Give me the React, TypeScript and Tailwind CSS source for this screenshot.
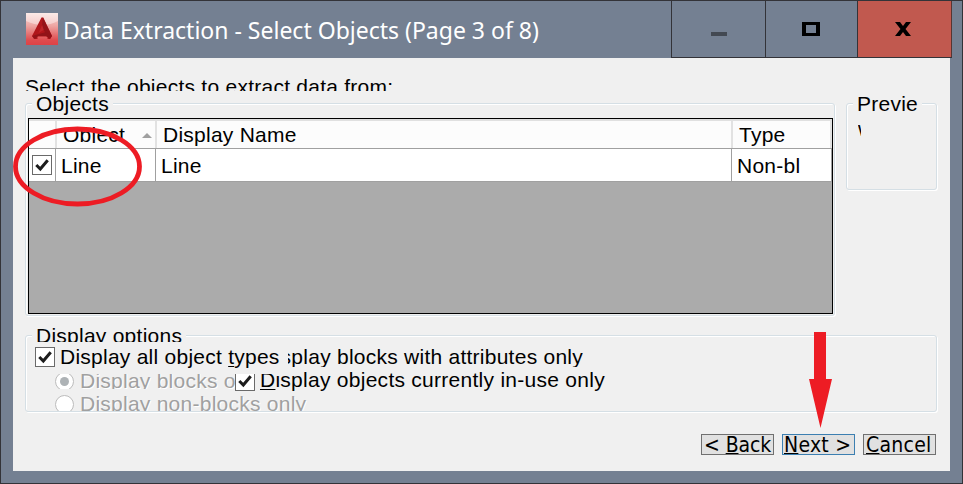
import type { ReactNode } from "react";

const groupBox =
  "flex flex-col items-start rounded-[3px] border border-[#d5dfe5] shadow-[inset_1px_1px_0_#fff,1px_1px_0_#fff]";

function AppLogo() {
  return (
    <svg width="32" height="32" viewBox="0 0 32 32" className="block">
      <defs>
        <linearGradient id="tile" x1="0" y1="0" x2="0" y2="1">
          <stop offset="0" stopColor="#f9dcd8" />
          <stop offset="0.4" stopColor="#eea5a2" />
          <stop offset="0.85" stopColor="#df4b4e" />
          <stop offset="1" stopColor="#dd4246" />
        </linearGradient>
      </defs>
      <rect width="32" height="32" fill="url(#tile)" />
      <path d="M0 0h32v8Q17 16 0 8z" fill="#fff" opacity="0.4" />
      <path d="M15.500 4.500h1.800L26 23l-2 3h-2.500v-2.500h-10V26H8l-2-3z" fill="#b0161b" />
      <path d="M16.800 4.500L26 23l-6-2-4-7z" fill="#941318" />
      <path d="M6 23l14-4 6 4-2 3-4-3H12l-3 3z" fill="#921318" />
      <path d="M16.200 12l1.500 5-5.200 3z" fill="#bf2428" />
    </svg>
  );
}

function CheckBox({ className = "" }: { className?: string }) {
  return (
    <span className={`block h-5 w-5 shrink-0 border border-[#6a6a6a] bg-white ${className}`}>
      <svg width="18" height="18" viewBox="0 0 18 18" className="block">
        <path d="M3.300 9l4 4 7.400-8.800" fill="none" stroke="#1c1c1c" strokeWidth="3" />
      </svg>
    </span>
  );
}

function Radio({ checked = false }: { checked?: boolean }) {
  return (
    <span className="flex h-[19px] w-[19px] shrink-0 items-center justify-center rounded-full border border-[#bcbcbc] bg-white">
      {checked && <span className="h-[9px] w-[9px] rounded-full bg-[#adb2b5]" />}
    </span>
  );
}

function WizardButton({ children, className = "" }: { children: ReactNode; className?: string }) {
  return (
    <button
      className={`flex h-[21px] w-[73px] items-start overflow-hidden whitespace-pre border bg-[#e1e1e1] text-left font-['DejaVu_Sans_Condensed','DejaVu_Sans',sans-serif] text-[21px] leading-[21px] ${className}`}
    >
      <span className="block">{children}</span>
    </button>
  );
}

function Key({ children, className = "underline-offset-2" }: { children: ReactNode; className?: string }) {
  return <span className={`underline decoration-1 ${className}`}>{children}</span>;
}

export default function App() {
  return (
    <div className="relative flex h-[484px] w-[963px] flex-col overflow-hidden border border-[#333338] bg-[#748092] font-['Liberation_Sans',Arial,sans-serif] text-[21px] leading-5 tracking-[0.25px] text-black">
      <header className="flex h-[57px] shrink-0 items-start">
        <div className="flex h-[57px] flex-1 items-start pl-[25px] pt-3">
          <AppLogo />
          <h1 className="ml-[5px] whitespace-nowrap pt-px font-['Noto_Sans','Open_Sans',sans-serif] text-[23px] leading-8 tracking-[0px] text-white">
            Data Extraction - Select Objects (Page 3 of 8)
          </h1>
        </div>
        <div className="mr-2.5 flex h-[57px] w-[281px] border-b border-l border-[#333338]">
          <div className="w-[94px] border-r border-[#333338] pl-[39px] pt-[31px]">
            <div className="h-1 w-4 bg-[#434952]" />
          </div>
          <div className="w-[92px] border-r border-[#333338] pl-[36px] pt-[21px]">
            <div className="h-[14px] w-[18px] border-4 border-y-[3px] border-black" />
          </div>
          <div className="flex-1 border-r border-[#583532] bg-[#c1594f] pl-[37px] pt-[21px]">
            <svg width="16" height="14" viewBox="0 0 16 14" className="block">
              <path d="M0 0h5l3 4 3-4h5l-5.500 7 5.500 7h-5l-3-4-3 4H0l5.500-7z" fill="#000" />
            </svg>
          </div>
        </div>
      </header>

      <main className="ml-3 flex h-[413px] w-[937px] flex-col bg-[#f0f0f0] pl-3">
        <p className="mt-[19px] h-[14px] overflow-hidden whitespace-nowrap">
          Select the objects to extract data from:
        </p>

        <div className="mt-3 flex items-start gap-[11px]">
          <section className={`${groupBox} h-[213px] w-[810px]`}>
            <h2 className="-mt-2.5 ml-1.5 h-5 bg-[#f0f0f0] px-1">Objects</h2>
            <div className="ml-0.5 mt-1 flex h-[196px] w-[805px] flex-col border border-black bg-[#ababab]">
              <div className="flex h-[30px] w-[803px] border-b border-[#a0a0a0] border-t-2 border-t-[#e0e0e0] bg-[#fcfcfc]">
                <div className="w-7 border-r-2 border-[#e2e2e2]" />
                <div className="flex w-[100px] justify-between border-r-2 border-[#e2e2e2] pl-1.5 pr-[3px] pt-1">
                  <span className="h-[18px] overflow-hidden">Object</span>
                  <svg width="10" height="5" viewBox="0 0 10 5" className="mt-2">
                    <path d="M5 0l5 5H0z" fill="#a0a0a0" />
                  </svg>
                </div>
                <div className="w-[576px] border-r-2 border-[#e2e2e2] pl-1.5 pt-1">Display Name</div>
                <div className="flex-1 border-r-2 border-[#e2e2e2] pl-1.5 pt-1">Type</div>
              </div>
              <div className="flex h-[33px] w-[803px] border-b border-[#a0a0a0] bg-white">
                <div className="w-[27px] border-r border-[#a0a0a0] pl-[3px] pt-1.5">
                  <CheckBox />
                </div>
                <div className="w-[100px] border-r border-[#a0a0a0] pl-[5px] pt-[7px]">Line</div>
                <div className="w-[576px] border-r border-[#a0a0a0] pl-[5px] pt-[7px]">Line</div>
                <div className="flex-1 whitespace-nowrap border-r border-[#a0a0a0] pl-[5px] pt-[7px]">Non-bl</div>
              </div>
            </div>
          </section>

          <section className={`${groupBox} h-[87px] w-[91px]`}>
            <h2 className="-mt-2.5 ml-1.5 h-5 bg-[#f0f0f0] px-1">Previe</h2>
            <span className="ml-[11px] mt-[5px] h-5 w-[3px] overflow-hidden">w</span>
          </section>
        </div>

        <section className={`${groupBox} mt-[19px] h-[77px] w-[912px]`}>
          <h2 className="-mt-[11px] ml-1.5 h-[18px] overflow-hidden whitespace-nowrap bg-[#f0f0f0] px-1">
            <span className="block pt-px">Display options</span>
          </h2>
          <div className="ml-[9px] mt-1 flex h-[22px] items-start whitespace-nowrap">
            <CheckBox className="mt-px" />
            <span className="-mr-0.5 ml-[5px] w-[227px] pt-px">
              Display all object <Key>t</Key>ypes
            </span>
            <span className="ml-[3px] flex h-[21px] w-[295px] justify-end overflow-hidden pt-px">
              <span>Display blocks with attributes only</span>
            </span>
          </div>
          <div className="ml-[29px] mt-1.5 flex h-[18px] items-start whitespace-nowrap">
            <div className="flex h-[15px] w-[180px] items-start overflow-hidden text-[#a0a0a0]">
              <div className="-mt-[2px] flex">
                <Radio checked />
                <span className="-mt-px ml-1.5 [text-shadow:1px_1px_0_#fff]">Display blocks only</span>
              </div>
            </div>
            <div className="flex h-[19px] items-start">
              <span className="flex h-[18px] items-start overflow-hidden">
                <CheckBox className="-mt-[3px]" />
                <span className="-mt-1 ml-[5px] h-[23px]">
                  <Key>D</Key>i
                </span>
              </span>
              <span className="-mt-1 tracking-[0.27px]">splay objects currently in-use only</span>
            </div>
          </div>
          <div className="ml-[29px] mt-0.5 flex h-[18px] items-start overflow-hidden whitespace-nowrap bg-[#f0f0f0] pr-2 text-[#a0a0a0]">
            <span className="mt-px">
              <Radio />
            </span>
            <span className="ml-1.5 [text-shadow:1px_1px_0_#fff]">Display non-blocks only</span>
          </div>
        </section>

        <footer className="mt-[22px] flex gap-2 pl-[676px]">
          <WizardButton className="border-[#707070] pl-0.5 tracking-[-0.1px]">
            &lt; <Key className="underline-offset-1">B</Key>ack
          </WizardButton>
          <WizardButton className="border-[#3c7fb1] pl-px">
            <Key className="underline-offset-1">N</Key>ext &gt;
          </WizardButton>
          <WizardButton className="border-[#707070] pl-0.5">
            <Key className="underline-offset-1">C</Key>ancel
          </WizardButton>
        </footer>
      </main>

      <svg width="963" height="484" viewBox="0 0 963 484" className="pointer-events-none absolute -left-px -top-px">
        <ellipse cx="77.500" cy="166.500" rx="62" ry="37.500" fill="none" stroke="#ed1c24" strokeWidth="4.800" />
        <path d="M814 332h12v47h6l-11.500 49L809 379h5z" fill="#ed1c24" />
      </svg>
    </div>
  );
}
